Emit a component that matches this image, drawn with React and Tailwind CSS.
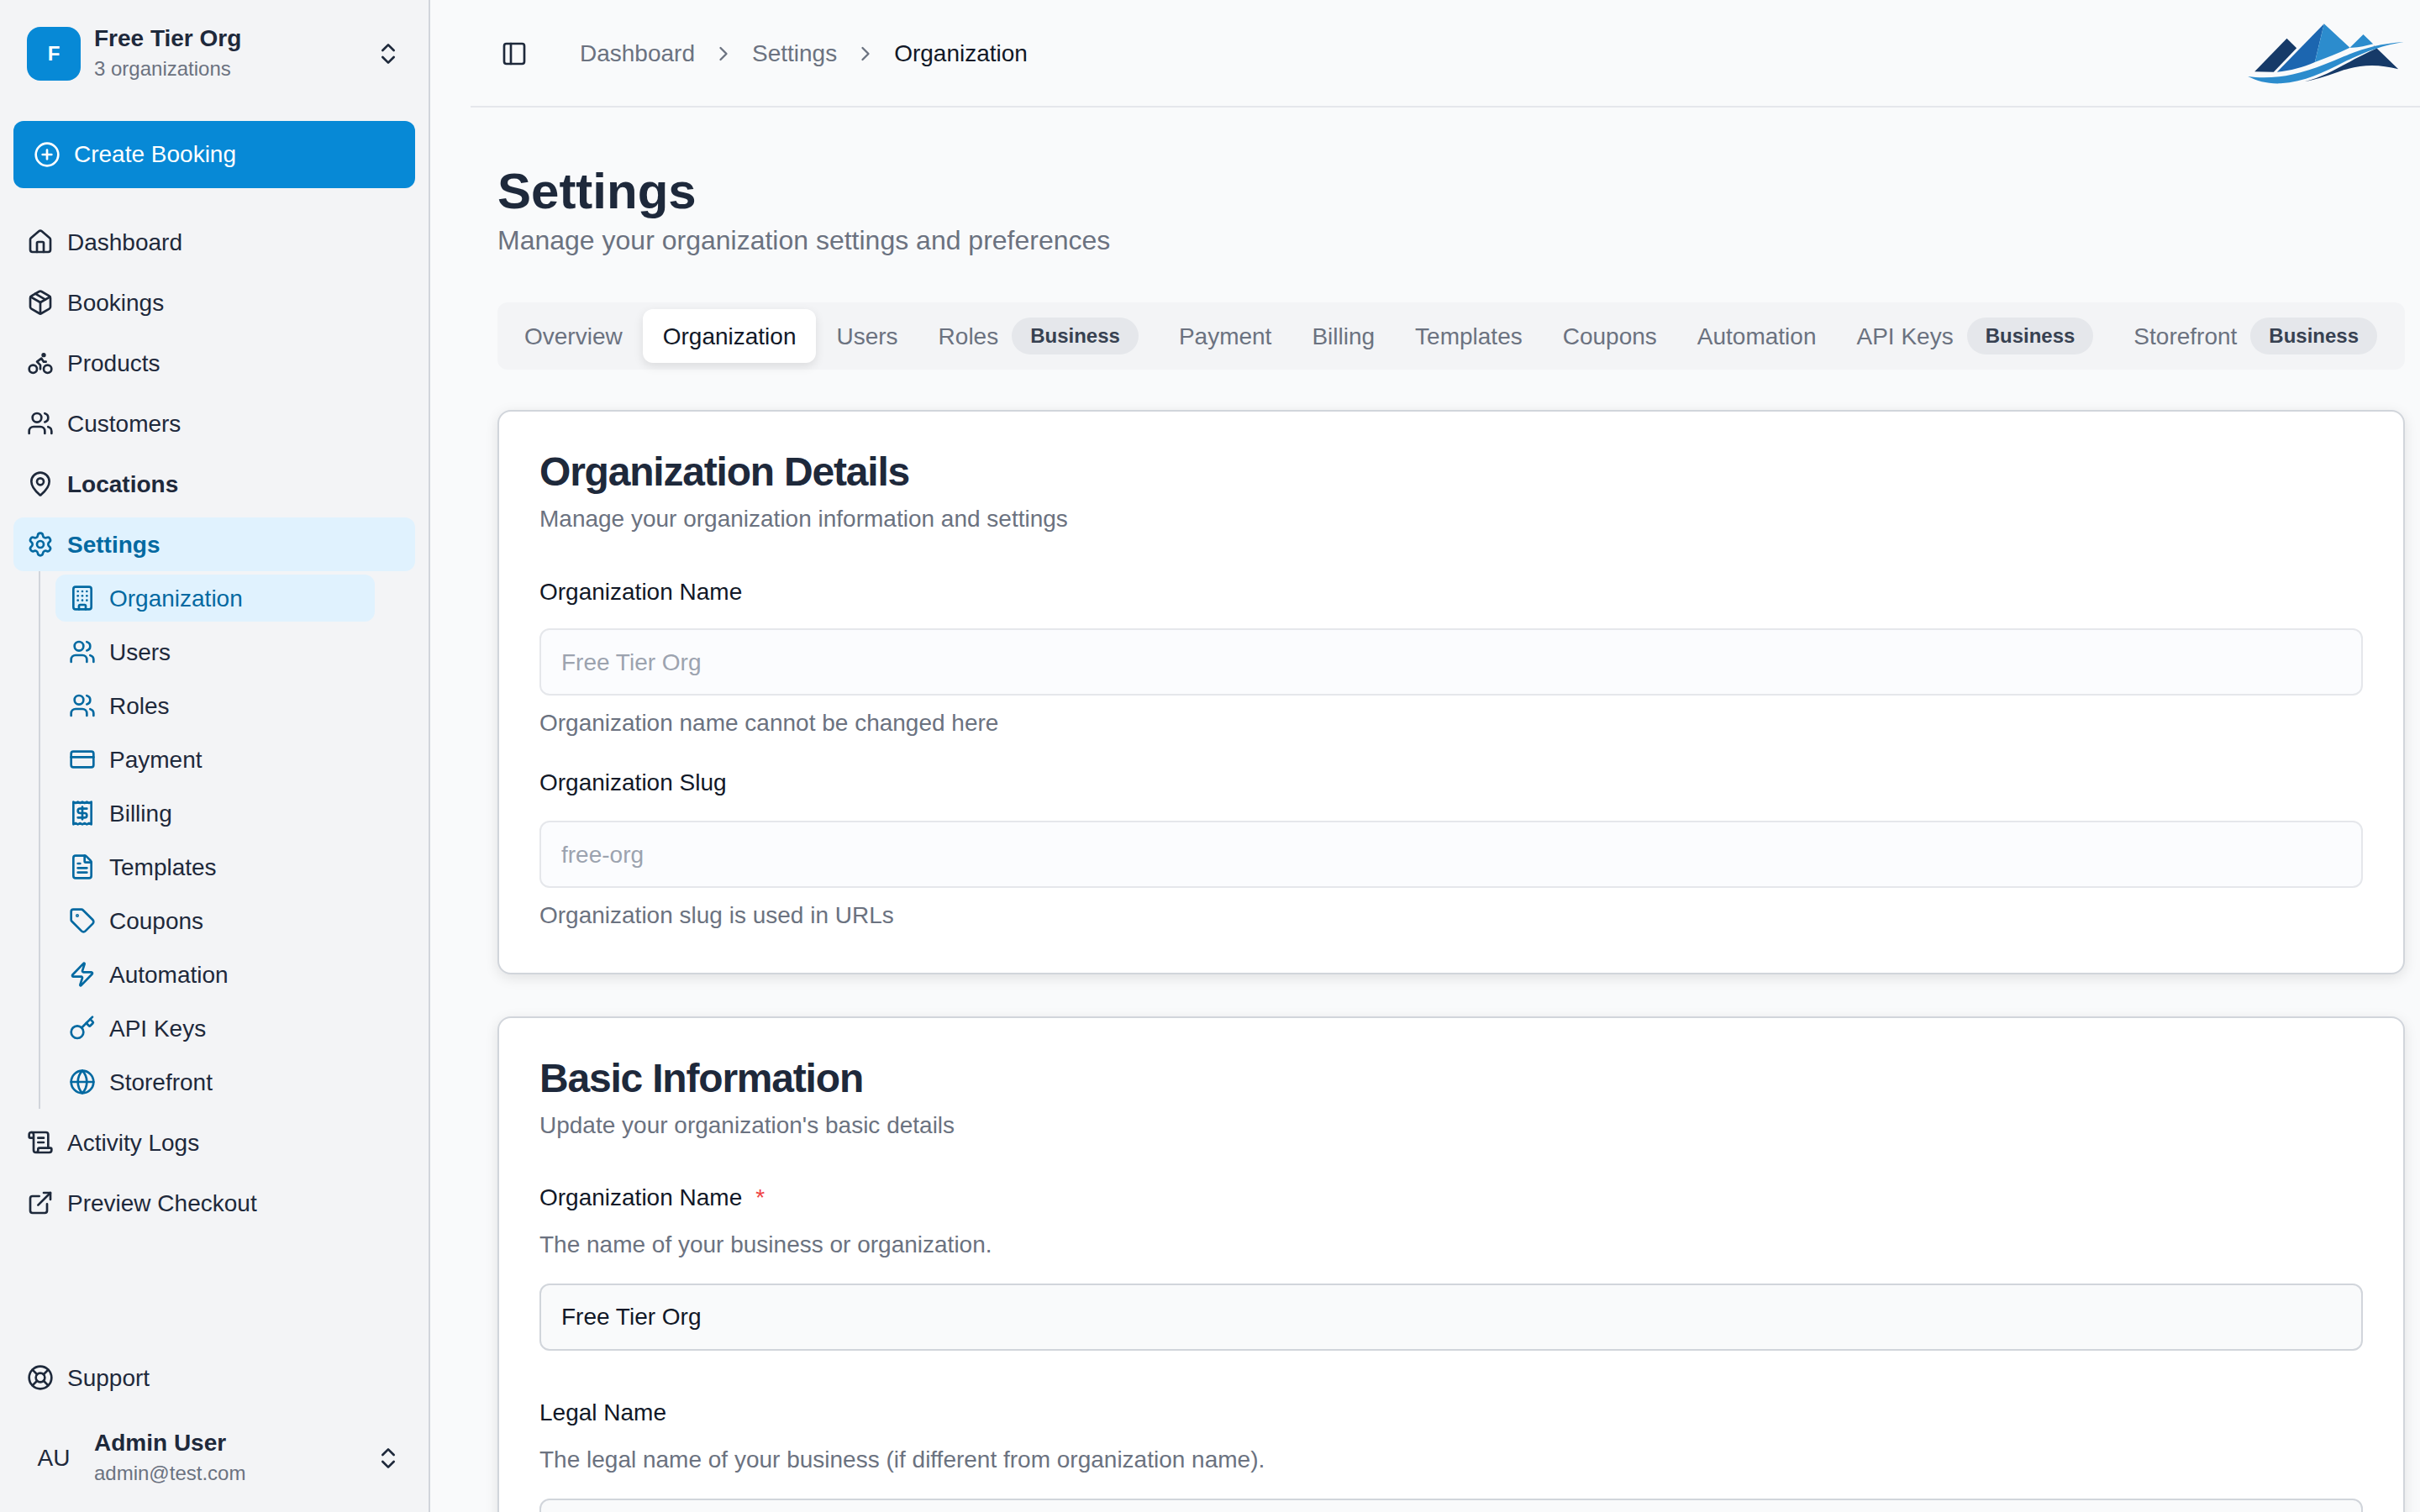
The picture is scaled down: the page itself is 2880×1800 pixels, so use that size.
import React from "react";
import {
  House, Package, Bike, Users, MapPin, Settings, Building, CreditCard, Receipt, FileText, Tag, Zap, Key, Globe,
  ScrollText, ExternalLink, LifeBuoy, ChevronsUpDown, CirclePlus, PanelLeft, ChevronRight,
} from "lucide-react";

function Logo() {
  return (
    <svg viewBox="228 84 560 216" className="w-[187px] h-[72px] mr-[18px] ml-auto shrink-0">
      <path d="M252 256 L367 137 L402 172 L320 257 Z" fill="#163a68" />
      <path d="M332 257 L500 85 L467 222 C425 240 380 253 332 257 Z" fill="#1c66b0" />
      <path d="M500 85 L592 170 C550 190 510 205 467 222 Z" fill="#2c8ccd" />
      <path d="M592 170 L640 123 L675 157 C648 163 620 172 592 170 Z" fill="#2c8ccd" />
      <path d="M675 160 L765 247 C700 230 640 228 570 250 C520 268 480 282 430 292 C520 270 590 215 690 172 Z" fill="#163a68" />
      <path d="M228 273 C262 290 300 300 345 298 C430 293 500 258 570 222 C640 188 710 160 785 150 C700 156 640 172 570 202 C480 242 400 268 340 274 C300 278 262 278 228 273 Z" fill="#2c8ccd" />
    </svg>
  );
}

const topNav = [
  { icon: House, label: "Dashboard" },
  { icon: Package, label: "Bookings" },
  { icon: Bike, label: "Products" },
  { icon: Users, label: "Customers" },
];

const subNav = [
  { icon: Building, label: "Organization", active: true },
  { icon: Users, label: "Users" },
  { icon: Users, label: "Roles" },
  { icon: CreditCard, label: "Payment" },
  { icon: Receipt, label: "Billing" },
  { icon: FileText, label: "Templates" },
  { icon: Tag, label: "Coupons" },
  { icon: Zap, label: "Automation" },
  { icon: Key, label: "API Keys" },
  { icon: Globe, label: "Storefront" },
];

const tabs = [
  { label: "Overview" },
  { label: "Organization", active: true },
  { label: "Users" },
  { label: "Roles", badge: true },
  { label: "Payment" },
  { label: "Billing" },
  { label: "Templates" },
  { label: "Coupons" },
  { label: "Automation" },
  { label: "API Keys", badge: true },
  { label: "Storefront", badge: true },
];

function NavItem({ icon: Icon, label, bold }) {
  return (
    <a className={`flex items-center gap-4 h-16 px-4 rounded-xl text-[28px] text-[#1e293b] ${bold ? "font-bold" : ""}`}>
      <Icon size={32} className="shrink-0" />
      <span className="pt-[2px]">{label}</span>
    </a>
  );
}

function Account({ avatar, name, sub }) {
  return (
    <>
      {avatar}
      <div className="flex-1 h-16 flex flex-col justify-center gap-1">
        <div className="text-[28px] leading-8 font-bold text-[#1e293b]">{name}</div>
        <div className="text-[24px] leading-8 text-[#6b7280]">{sub}</div>
      </div>
      <ChevronsUpDown size={32} className="text-[#1e293b]" />
    </>
  );
}

function Sidebar() {
  return (
    <aside className="w-[512px] h-screen shrink-0 flex flex-col bg-[#f3f4f6] border-r-2 border-[#d1d5db]">
      <div className="flex items-center gap-4 pt-8 pl-8 pr-8">
        <Account
          avatar={<div className="w-16 h-16 rounded-2xl bg-[#0789d6] flex items-center justify-center text-white text-[24px] font-bold">F</div>}
          name="Free Tier Org"
          sub="3 organizations"
        />
      </div>
      <button className="mt-12 mx-4 h-20 rounded-xl bg-[#0789d6] text-white text-[28px] flex items-center gap-4 px-6">
        <CirclePlus size={32} />
        <span>Create Booking</span>
      </button>
      <nav className="mt-8 px-4 flex flex-col gap-2">
        {topNav.map((n) => <NavItem key={n.label} {...n} />)}
        <NavItem icon={MapPin} label="Locations" bold />
        <div>
          <a className="flex items-center gap-4 h-16 px-4 rounded-xl text-[28px] font-bold text-[#0369a1] bg-[#e0f2fe]">
            <Settings size={32} />
            <span className="pt-[2px]">Settings</span>
          </a>
          <div className="ml-[30px] mr-12 border-l-2 border-[#d1d5db] pl-[18px] py-1 flex flex-col gap-2">
            {subNav.map(({ icon: Icon, label, active }) => (
              <a key={label} className={`flex items-center gap-4 h-14 px-4 rounded-xl text-[28px] ${active ? "bg-[#e0f2fe] text-[#0369a1]" : "text-[#1e293b]"}`}>
                <Icon size={32} className="shrink-0 text-[#0369a1]" />
                <span className="pt-[2px]">{label}</span>
              </a>
            ))}
          </div>
        </div>
        <NavItem icon={ScrollText} label="Activity Logs" />
        <NavItem icon={ExternalLink} label="Preview Checkout" />
      </nav>
      <div className="mt-auto px-4">
        <NavItem icon={LifeBuoy} label="Support" />
      </div>
      <div className="flex items-center gap-4 mt-8 mb-8 px-8">
        <Account
          avatar={<div className="w-16 h-16 flex items-center justify-center text-[28px] text-[#1e293b]">AU</div>}
          name="Admin User"
          sub="admin@test.com"
        />
      </div>
    </aside>
  );
}

function Badge() {
  return <span className="h-11 flex items-center px-[22px] rounded-full bg-[#e5e7eb] text-[#374151] text-[24px] font-bold">Business</span>;
}

function Tabs() {
  return (
    <div className="mt-[50px] h-20 p-2 rounded-xl bg-[#f3f4f6] flex items-stretch">
      {tabs.map((t) => (
        <div key={t.label} className={`h-16 px-6 flex items-center gap-4 rounded-xl text-[28px] whitespace-nowrap ${t.active ? "bg-white text-[#111827] shadow-[0_4px_12px_rgba(0,0,0,0.1)]" : "text-[#6b7280]"}`}>
          <span className="pt-[2px]">{t.label}</span>
          {t.badge && <Badge />}
        </div>
      ))}
    </div>
  );
}

function Card({ title, desc, children, className = "" }) {
  return (
    <section className={`rounded-2xl border-2 border-[#d1d5db] bg-white shadow-[0_4px_16px_rgba(0,0,0,0.1)] px-12 pt-12 pb-12 ${className}`}>
      <h2 className="text-[48px] leading-[48px] font-bold tracking-tight text-[#1e293b]">{title}</h2>
      <p className="mt-3 text-[28px] leading-10 text-[#6b7280]">{desc}</p>
      {children}
    </section>
  );
}

function ReadonlyField({ label, value, help, labelGap, className = "" }) {
  return (
    <div className={className}>
      <div className="text-[28px] leading-[42px] text-[#111827]">{label}</div>
      <div className={`${labelGap} h-20 rounded-xl border-2 border-[#e5e7eb] bg-[#fbfcfe] px-6 pt-[2px] flex items-center text-[28px] text-[#9ca3af]`}>{value}</div>
      <p className="mt-[13px] text-[28px] leading-10 text-[#6b7280]">{help}</p>
    </div>
  );
}

function Field({ label, required, help, value, className = "" }) {
  return (
    <div className={className}>
      <div className="text-[28px] leading-[42px] text-[#111827]">
        {label}
        {required && <span className="ml-4 text-[#ef4444]">*</span>}
      </div>
      <p className="mt-[15px] text-[28px] leading-10 text-[#6b7280]">{help}</p>
      <div className="mt-[26px] h-20 rounded-xl border-2 border-[#d1d5db] bg-[#f9fafb] px-6 flex items-center text-[28px] text-[#111827]">{value}</div>
    </div>
  );
}

export default function App() {
  return (
    <div className="h-screen w-full overflow-hidden flex bg-[#f9fafb] font-['Liberation_Sans',Arial,sans-serif]">
      <Sidebar />
      <main className="flex-1 min-w-0 overflow-hidden">
        <header className="ml-12 h-32 border-b-2 border-[#e5e7eb] flex items-center pl-9 pt-[2px]">
          <PanelLeft size={32} className="text-[#1e293b] shrink-0" />
          <nav className="ml-[62px] flex items-center gap-5 text-[28px] text-[#6b7280]">
            <span>Dashboard</span>
            <ChevronRight size={28} />
            <span>Settings</span>
            <ChevronRight size={28} />
            <span className="text-[#111827]">Organization</span>
          </nav>
          <Logo />
        </header>
        <div className="pl-20 pr-[18px] pt-16">
          <h1 className="text-[60px] leading-[72px] font-bold text-[#1e293b]">Settings</h1>
          <p className="-mt-[2px] text-[32px] leading-12 text-[#6b7280]">Manage your organization settings and preferences</p>
          <Tabs />
          <Card title="Organization Details" desc="Manage your organization information and settings" className="mt-12">
            <ReadonlyField className="mt-[46px]" labelGap="mt-[22px]" label="Organization Name" value="Free Tier Org" help="Organization name cannot be changed here" />
            <ReadonlyField className="mt-[30px]" labelGap="mt-6" label="Organization Slug" value="free-org" help="Organization slug is used in URLs" />
          </Card>
          <Card title="Basic Information" desc="Update your organization's basic details" className="mt-[50px]">
            <Field className="mt-[45px]" label="Organization Name" required help="The name of your business or organization." value="Free Tier Org" />
            <Field className="mt-[53px]" label="Legal Name" help="The legal name of your business (if different from organization name)." value="" />
          </Card>
        </div>
      </main>
    </div>
  );
}
